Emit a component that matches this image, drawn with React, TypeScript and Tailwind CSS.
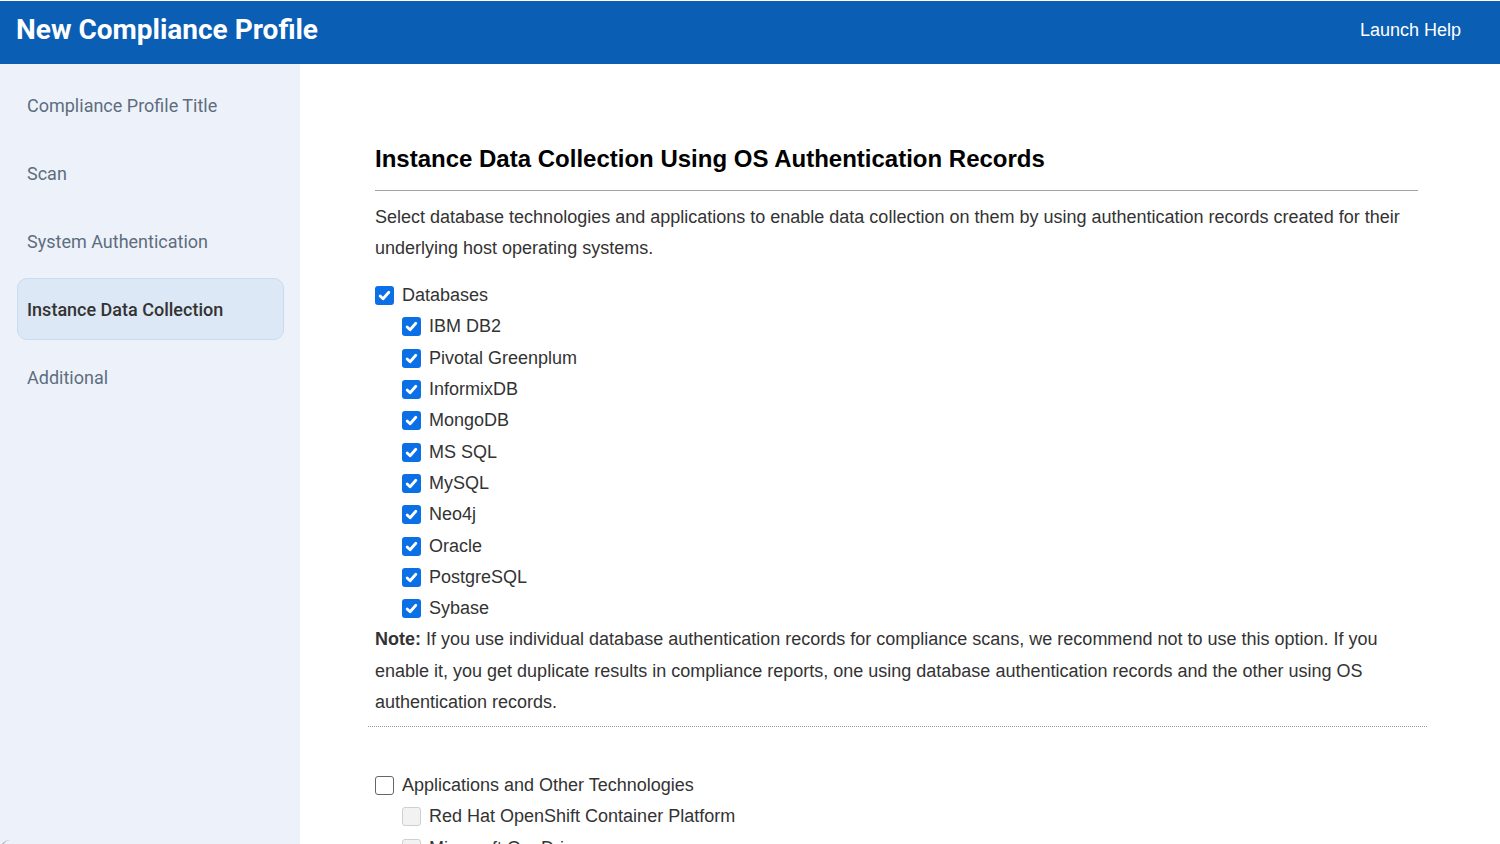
const dbs = ["IBM DB2", "Pivotal Greenplum", "InformixDB", "MongoDB", "MS SQL", "MySQL", "Neo4j", "Oracle", "PostgreSQL", "Sybase"]
const apps = ["Red Hat OpenShift Container Platform", "Microsoft OneDrive"]
const steps = ["Compliance Profile Title", "Scan", "System Authentication", "Instance Data Collection", "Additional"]

const Check = ({ state }: { state: "on" | "off" | "disabled" }) => {
    if (state === "on") {
        return (
            <span className="w-[19px] h-[19px] rounded-[3px] bg-[#0b6fe6] flex items-center justify-center shrink-0">
                <svg width="13" height="13" viewBox="0 0 12 12"><path d="M2 6.4 L4.7 9 L10 3" fill="none" stroke="white" strokeWidth="2.6" strokeLinecap="round" strokeLinejoin="round" /></svg>
            </span>
        )
    }
    if (state === "off") {
        return <span className="w-[19px] h-[19px] rounded-[3px] bg-white border-[1.5px] border-[#666] shrink-0"></span>
    }
    return <span className="w-[19px] h-[19px] rounded-[3px] bg-[#f2f2f2] border border-[#cfcfcf] shrink-0"></span>
}

const Row = ({ label, state, nested }: { label: string, state: "on" | "off" | "disabled", nested?: boolean }) => (
    <div className={"flex items-center gap-[8px] h-[31.3px] " + (nested ? "pl-[27px]" : "")}>
        <Check state={state} />
        <span className="text-[18px] text-[#333]">{label}</span>
    </div>
)

const App = () => {
    return (
        <div className="w-[1500px] h-[844px] overflow-hidden bg-white pt-px font-['Liberation_Sans',Arial,sans-serif]">

            {/*Header*/}
            <div className="h-[63px] bg-[#0a5eb4] flex items-center justify-between pl-[16px] pr-[39px] pb-[5px]">
                <h1 className="text-white text-[28px] font-bold font-['Roboto',sans-serif]">New Compliance Profile</h1>
                <span className="text-white text-[18px]">Launch Help</span>
            </div>

            <div className="flex h-[780px]">

                {/*Sidebar*/}
                <div className="relative w-[300px] shrink-0 bg-[#edf2fa] pt-[10px] px-[17px] font-['Roboto',sans-serif] flex flex-col gap-[6px]">
                    {steps.map((s) => (
                        s === "Instance Data Collection" ? (
                            <div key={s} className="h-[62px] rounded-[10px] bg-[#dce8f5] border border-[#c8dbef] flex items-center px-[9px] text-[18px] font-medium text-[#333] w-[267px]">{s}</div>
                        ) : (
                            <div key={s} className="h-[62px] flex items-center px-[10px] text-[18px] text-[#5e6d7e]">{s}</div>
                        )
                    ))}
                    <div className="absolute left-0 bottom-0 w-[10px] h-[10px] border-l-2 border-[#a8a8a8] rounded-tl-[10px] translate-y-[6px]"></div>
                </div>

                {/*Main*/}
                <div className="flex-1 pl-[75px] pr-[82px] pt-[81px]">
                    <h2 className="text-[24px] font-bold text-black leading-[28px]">Instance Data Collection Using OS Authentication Records</h2>
                    <div className="mt-[17px] border-t border-[#a3a3a3]"></div>

                    <p className="mt-[11px] text-[18px] leading-[31px] text-[#333]">
                        Select database technologies and applications to enable data collection on them by using authentication records created for their underlying host operating systems.
                    </p>

                    <div className="mt-[16px]">
                        <Row label="Databases" state="on" />
                        {dbs.map((d) => <Row key={d} label={d} state="on" nested />)}
                    </div>

                    <p className="text-[18px] leading-[31.5px] text-[#333]">
                        <b>Note:</b> If you use individual database authentication records for compliance scans, we recommend not to use this option. If you enable it, you get duplicate results in compliance reports, one using database authentication records and the other using OS authentication records.
                    </p>
                    <div className="mt-[7px] -ml-[7px] -mr-[9px] border-t border-dotted border-[#9a9a9a]"></div>

                    <div className="mt-[43px]">
                        <Row label="Applications and Other Technologies" state="off" />
                        {apps.map((a) => <Row key={a} label={a} state="disabled" nested />)}
                    </div>
                </div>
            </div>
        </div>
    )
}

export default App
